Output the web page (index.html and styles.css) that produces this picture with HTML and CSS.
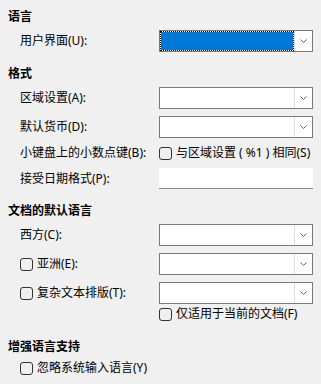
FILE: index.html
```html
<!DOCTYPE html>
<html lang="zh-CN">
<head>
<meta charset="UTF-8" />
<title>语言选项</title>
<link rel="stylesheet" href="styles.css">
</head>
<body>
  <div class="page">
    <section class="group">
      <div class="group-title">语言</div>
      <div class="rows">
        <div class="row">
          <span class="label">用户界面(U):</span>
          <div class="combo focused">
            <div class="combo-value"></div>
            <div class="combo-btn"><svg width="7" height="4" viewBox="0 0 7 4"><path d="M0.5 0.5 L3.5 3.5 L6.5 0.5" /></svg></div>
          </div>
        </div>
      </div>
    </section>

    <section class="group">
      <div class="group-title">格式</div>
      <div class="rows">
        <div class="row">
          <span class="label">区域设置(A):</span>
          <div class="combo">
            <div class="combo-value"></div>
            <div class="combo-btn"><svg width="7" height="4" viewBox="0 0 7 4"><path d="M0.5 0.5 L3.5 3.5 L6.5 0.5" /></svg></div>
          </div>
        </div>
        <div class="row">
          <span class="label">默认货币(D):</span>
          <div class="combo">
            <div class="combo-value"></div>
            <div class="combo-btn"><svg width="7" height="4" viewBox="0 0 7 4"><path d="M0.5 0.5 L3.5 3.5 L6.5 0.5" /></svg></div>
          </div>
        </div>
        <div class="row check-row">
          <span class="label">小键盘上的小数点键(B):</span>
          <label class="check"><span class="box"></span>与区域设置 ( %1 ) 相同(S)</label>
        </div>
        <div class="row field-row">
          <span class="label">接受日期格式(P):</span>
          <div class="textbox"></div>
        </div>
      </div>
    </section>

    <section class="group">
      <div class="group-title">文档的默认语言</div>
      <div class="rows">
        <div class="row">
          <span class="label">西方(C):</span>
          <div class="combo">
            <div class="combo-value"></div>
            <div class="combo-btn"><svg width="7" height="4" viewBox="0 0 7 4"><path d="M0.5 0.5 L3.5 3.5 L6.5 0.5" /></svg></div>
          </div>
        </div>
        <div class="row">
          <label class="check"><span class="box"></span>亚洲(E):</label>
          <div class="combo">
            <div class="combo-value"></div>
            <div class="combo-btn"><svg width="7" height="4" viewBox="0 0 7 4"><path d="M0.5 0.5 L3.5 3.5 L6.5 0.5" /></svg></div>
          </div>
        </div>
        <div class="row">
          <label class="check"><span class="box"></span>复杂文本排版(T):</label>
          <div class="combo">
            <div class="combo-value"></div>
            <div class="combo-btn"><svg width="7" height="4" viewBox="0 0 7 4"><path d="M0.5 0.5 L3.5 3.5 L6.5 0.5" /></svg></div>
          </div>
        </div>
        <div class="row check-row sub-option">
          <span class="label"></span>
          <label class="check"><span class="box"></span>仅适用于当前的文档(F)</label>
        </div>
      </div>
    </section>

    <section class="group last">
      <div class="group-title">增强语言支持</div>
      <div class="rows">
        <div class="row check-row">
          <label class="check wide"><span class="box"></span>忽略系统输入语言(Y)</label>
        </div>
      </div>
    </section>
  </div>
</body>
</html>
```

FILE: styles.css
```css
body {
  margin: 0;
  background: #f0f0f0;
  color: #000;
  font-family: "Noto Sans", "Noto Sans CJK SC", sans-serif;
  font-size: 12px;
}
.page {
  width: 321px;
  height: 384px;
  padding: 9px 0 0 8px;
  box-sizing: border-box;
  overflow: hidden;
}

/* Groups */
.group + .group {
  margin-top: 14px;
}
.group.last {
  margin-top: 17px;
}
.group-title {
  font-weight: bold;
  line-height: 16px;
  height: 16px;
  margin-bottom: 5px;
}
.rows {
  display: flex;
  flex-direction: column;
  gap: 7px;
}
.row {
  display: grid;
  grid-template-columns: 139px 154px;
  align-items: center;
  height: 22px;
  padding-left: 12px;
}
.check-row {
  height: 16px;
}
.field-row {
  height: 21px;
}
.sub-option {
  margin-top: -5px;
}
.label {
  line-height: 16px;
  white-space: nowrap;
}

/* Combo box */
.combo {
  display: flex;
  height: 22px;
  border: 1px solid #7a7a7a;
  background: #fff;
  box-sizing: border-box;
}
.combo-value {
  flex: 1;
}
.combo.focused .combo-value {
  border: 1px dotted #000;
  background: #0078d7;
  background-clip: padding-box;
}
.combo-btn {
  width: 17px;
  display: flex;
  align-items: center;
  justify-content: center;
  border-left: 1px solid #dcdcdc;
  background: #fff;
}
.combo-btn svg path {
  fill: none;
  stroke: #606060;
  stroke-width: 1;
}

/* Text box */
.textbox {
  height: 21px;
  background: #fff;
  border-bottom: 1px solid #868686;
  box-sizing: border-box;
}

/* Check box */
.check {
  display: flex;
  align-items: center;
  gap: 4px;
  line-height: 16px;
  white-space: nowrap;
}
.check.wide {
  grid-column: 1 / 3;
}
.box {
  width: 13px;
  height: 13px;
  border: 1px solid #333;
  border-radius: 3px;
  box-sizing: border-box;
  flex: none;
}
```
